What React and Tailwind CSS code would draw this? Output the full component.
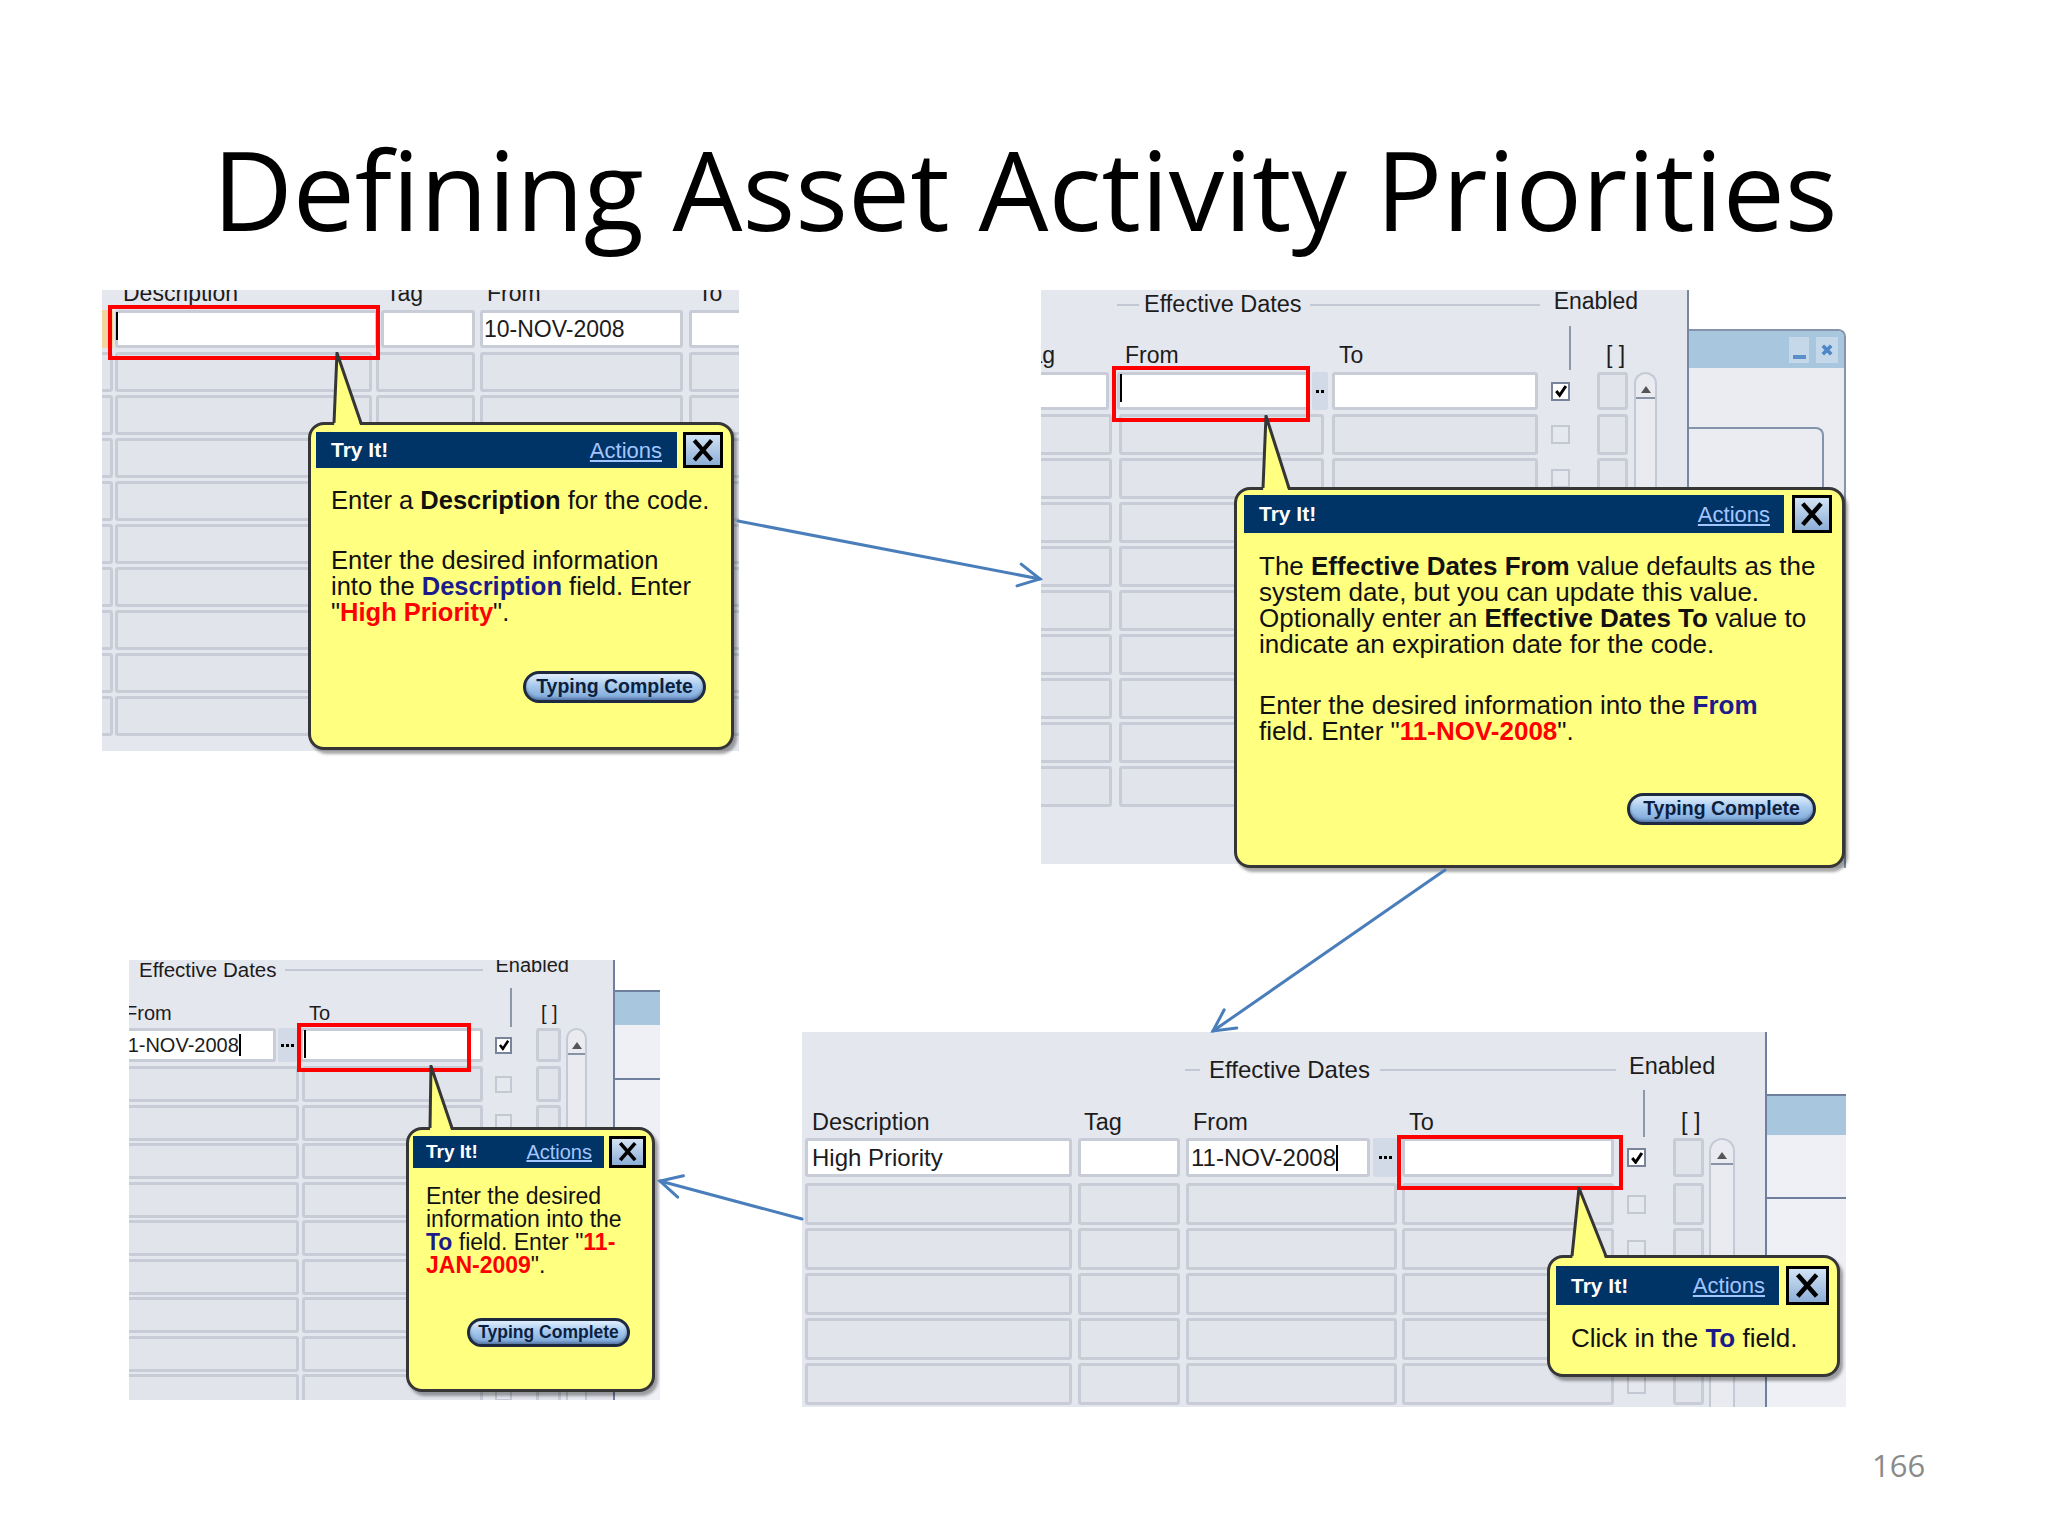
import React from 'react';

// shared bits of the Oracle form look
const cell = 'h-full shrink-0 rounded-[3px] border-[3px] border-[#c8ccd7] bg-[#e2e4ec]';
const field = 'flex h-full shrink-0 items-center overflow-hidden whitespace-nowrap rounded-[3px] border-[3px] border-[#c8ccd7] bg-white';
const ui = "font-['Liberation_Sans',Arial,sans-serif]";

const ARROWS = [
  [738, 521, 1040, 579],
  [1445, 870, 1213, 1031],
  [802, 1219, 660, 1181],
];

const arrowHead = (x1, y1, x2, y2) => {
  const a = Math.atan2(y2 - y1, x2 - x1);
  const len = 24;
  const s = 0.48;
  return `${x2 - len * Math.cos(a - s)},${y2 - len * Math.sin(a - s)} ${x2},${y2} ${x2 - len * Math.cos(a + s)},${y2 - len * Math.sin(a + s)}`;
};

const Box = ({ on, className }) => (
  <div
    className={`flex shrink-0 items-center justify-center self-center border-2 ${
      on ? 'border-[#79839a] bg-white' : 'border-[#c3c8d3] bg-[#e6e8ef]'
    } ${className}`}
  >
    {on && (
      <svg viewBox="0 0 12 12" className="h-[90%] w-[90%]">
        <path d="M2 6.2 L5 10 L10.5 1.8" fill="none" stroke="#000" strokeWidth="2.6" />
      </svg>
    )}
  </div>
);

const Dots = ({ className }) => (
  <div className={`flex h-full shrink-0 items-center justify-center gap-[2px] rounded-[2px] bg-[#d3dae7] ${className}`}>
    <span className="size-[3px] bg-black" />
    <span className="size-[3px] bg-black" />
    <span className="size-[3px] bg-black" />
  </div>
);

const Scroll = ({ className }) => (
  <div className={`shrink-0 rounded-t-full border-2 border-b-0 border-[#c3c9d5] bg-[#e9ebf1] ${className}`}>
    <div className="mx-auto mt-[12px] h-0 w-0 border-x-[5px] border-b-[7px] border-x-transparent border-b-[#555]" />
    <div className="mt-[4px] h-[2px] bg-[#8a93a6]" />
  </div>
);

const Cursor = ({ className }) => <span className={`inline-block w-[2px] bg-black ${className}`} />;

const Tail = ({ className, w, h, tip, l, r }) => (
  <svg className={`absolute ${className}`} width={w} height={h + 6} viewBox={`0 0 ${w} ${h + 6}`}>
    <polygon points={`${tip},1 ${r},${h + 6} ${l},${h + 6}`} fill="#ffff80" />
    <polyline
      points={`${l},${h + 1} ${tip},1 ${r},${h + 1}`}
      fill="none"
      stroke="#363636"
      strokeWidth="3"
      strokeLinejoin="round"
    />
  </svg>
);

const CloseX = ({ className }) => (
  <div
    className={`flex shrink-0 items-center justify-center border-[3px] border-black bg-[linear-gradient(#d2e3f5,#8caed6)] ${className}`}
  >
    <svg viewBox="0 0 20 20" className="h-[82%] w-[82%]">
      <path d="M3 2 L17 18 M17 2 L3 18" stroke="#000" strokeWidth="3.4" />
    </svg>
  </div>
);

const TypingBtn = ({ className }) => (
  <div
    className={`flex items-center justify-center rounded-full border-[3px] border-[#1d2a40] bg-[linear-gradient(#e1effd,#a6c9ee_45%,#7ba7d8)] font-bold text-[#0d1f3f] shadow-[inset_0_-2px_3px_rgba(0,0,50,0.3)] ${className}`}
  >
    Typing Complete
  </div>
);

const Callout = ({ box, tail, bar, children }) => (
  <div
    className={`absolute rounded-[16px] border-[3px] border-[#363636] bg-[#ffff80] text-[#111] shadow-[3px_4px_3px_rgba(0,0,0,0.35)] ${ui} ${box}`}
  >
    {tail}
    <div className={`flex ${bar.wrap}`}>
      <div className={`flex h-full items-center justify-between bg-[#003366] ${bar.navy}`}>
        <span className={`font-bold text-white ${bar.tryText}`}>Try It!</span>
        <span className={`text-[#a3c5ff] underline ${bar.actText}`}>Actions</span>
      </div>
      <CloseX className={bar.close} />
    </div>
    {children}
  </div>
);

const Blue = ({ children }) => <b className="text-[#1b1b8a]">{children}</b>;
const Red = ({ children }) => <b className="text-[#ff0000]">{children}</b>;

function Panel1() {
  return (
    <div className={`absolute left-[102px] top-[290px] h-[461px] w-[637px] ${ui}`}>
      <div className="h-full w-full overflow-hidden bg-[#e5e7ee] text-[23px] leading-none text-[#1c1c1c]">
        <div className="-mt-[8px] flex h-[28px] items-start">
          <span className="w-[284px] shrink-0 pl-[21px]">Description</span>
          <span className="w-[101px] shrink-0">Tag</span>
          <span className="w-[211px] shrink-0">From</span>
          <span>To</span>
        </div>
        <div className="flex h-[38px]">
          <div className="h-full w-[11px] shrink-0 bg-[#f4d6a0]" />
          <div className={`${field} ml-[2px] w-[263px]`} />
          <div className={`${field} ml-[3px] w-[94px]`} />
          <div className={`${field} ml-[5px] w-[203px] pl-[1px] text-[23px]`}>10-NOV-2008</div>
          <div className={`${field} ml-[6px] w-[60px]`} />
        </div>
        <div className="mt-[4px] flex flex-col gap-[3px]">
          {Array.from({ length: 9 }).map((_, i) => (
            <div key={i} className="flex h-[40px]">
              <div className={`${cell} -ml-[3px] w-[14px]`} />
              <div className={`${cell} ml-[2px] w-[257px]`} />
              <div className={`${cell} ml-[4px] w-[99px]`} />
              <div className={`${cell} ml-[5px] w-[203px]`} />
              <div className={`${cell} ml-[6px] w-[60px]`} />
            </div>
          ))}
        </div>
      </div>

      {/* highlighted field */}
      <div className="absolute left-[6px] top-[15px] h-[55px] w-[272px] border-[4px] border-[#ff0000]">
        <Cursor className="ml-[4px] mt-[3px] h-[28px]" />
      </div>

      <Callout
        box="left-[206px] top-[132px] h-[328px] w-[426px]"
        tail={<Tail className="left-[-3px] top-[-73px]" w={60} h={70} tip={29} l={26} r={53} />}
        bar={{
          wrap: 'mt-[7px] ml-[5px] h-[36px]',
          navy: 'w-[361px] pl-[15px] pr-[15px]',
          tryText: 'text-[21px]',
          actText: 'text-[22px]',
          close: 'ml-[6px] h-[36px] w-[40px]',
        }}
      >
        <div className="whitespace-nowrap pl-[20px] text-[25.5px] leading-[26px]">
          <p className="mt-[19px]">
            Enter a <b>Description</b> for the code.
          </p>
          <p className="mt-[34px]">
            Enter the desired information
            <br />
            into the <Blue>Description</Blue> field. Enter
            <br />"<Red>High Priority</Red>".
          </p>
        </div>
        <TypingBtn className="ml-[212px] mt-[46px] h-[32px] w-[183px] text-[19.5px]" />
      </Callout>
    </div>
  );
}

function Panel2() {
  return (
    <div className={`absolute left-[1041px] top-[290px] h-[578px] w-[805px] ${ui}`}>
      <div className="flex h-full items-start">
        <div className="h-[574px] w-[648px] shrink-0 overflow-hidden border-r-2 border-[#7886a0] bg-[#e5e7ee] text-[23px] leading-none text-[#1c1c1c]">
          <div className="flex h-[30px] items-center">
            <div className="ml-[76px] h-[2px] w-[22px] shrink-0 bg-[#c3c8d4]" />
            <span className="ml-[5px] shrink-0 text-[23.5px]">Effective Dates</span>
            <div className="ml-[8px] h-[2px] w-[230px] shrink-0 bg-[#c3c8d4]" />
            <span className="-mt-[8px] ml-[14px] shrink-0">Enabled</span>
          </div>
          <div className="flex h-[52px] items-end pb-[5px]">
            <span className="-ml-[23px] w-[107px] shrink-0">Tag</span>
            <span className="w-[214px] shrink-0">From</span>
            <span className="w-[230px] shrink-0">To</span>
            <div className="-mb-[3px] h-[44px] w-[2px] shrink-0 bg-[#8e97aa]" />
            <span className="ml-[35px] shrink-0">[ ]</span>
          </div>
          <div className="flex items-start">
            <div className="flex shrink-0 flex-col">
              <div className="flex h-[38px]">
                <div className={`${field} -ml-[4px] w-[72px]`} />
                <div className={`${field} ml-[8px] w-[192px]`} />
                <Dots className="ml-[3px] w-[16px] [&>span:first-child]:hidden" />
                <div className={`${field} ml-[4px] w-[206px]`} />
                <Box on className="ml-[13px] size-[19px]" />
                <div className={`${cell} ml-[27px] w-[31px]`} />
              </div>
              <div className="mt-[4px] flex flex-col gap-[3px]">
                {Array.from({ length: 9 }).map((_, i) => (
                  <div key={i} className="flex h-[41px]">
                    <div className={`${cell} -ml-[4px] w-[75px]`} />
                    <div className={`${cell} ml-[7px] w-[205px]`} />
                    <div className={`${cell} ml-[8px] w-[206px]`} />
                    <Box className="ml-[13px] size-[19px]" />
                    <div className={`${cell} ml-[27px] w-[31px]`} />
                  </div>
                ))}
              </div>
            </div>
            <Scroll className="ml-[6px] h-[460px] w-[23px]" />
          </div>
        </div>

        {/* window behind */}
        <div className="mt-[39px] flex h-[539px] w-[157px] shrink-0 flex-col rounded-tr-[8px] border-r-2 border-t-2 border-[#8594ad] bg-[#eaecf2]">
          <div className="flex h-[37px] items-center justify-end gap-[7px] rounded-tr-[6px] bg-[#a9c6df] pr-[6px]">
            <div className="flex h-[26px] w-[20px] items-end justify-center bg-[#c4d8ea] pb-[4px]">
              <div className="h-[4px] w-[13px] bg-[#5b8fc9]" />
            </div>
            <div className="flex h-[26px] w-[22px] items-center justify-center bg-[#c4d8ea]">
              <svg viewBox="0 0 10 10" className="size-[14px]">
                <path d="M2 2 L8 8 M8 2 L2 8" stroke="#4f86c6" strokeWidth="2.6" />
              </svg>
            </div>
          </div>
          <div className="mr-[20px] mt-[59px] h-[200px] rounded-tr-[8px] border-r-2 border-t-2 border-[#8594ad]" />
        </div>
      </div>

      <div className="absolute left-[71px] top-[76px] h-[56px] w-[198px] border-[4px] border-[#ff0000]">
        <Cursor className="ml-[4px] mt-[4px] h-[28px]" />
      </div>

      <Callout
        box="left-[193px] top-[197px] h-[381px] w-[611px]"
        tail={<Tail className="left-[-3px] top-[-75px]" w={64} h={72} tip={32} l={29} r={55} />}
        bar={{
          wrap: 'mt-[5px] ml-[7px] h-[38px]',
          navy: 'w-[540px] pl-[15px] pr-[14px]',
          tryText: 'text-[21px]',
          actText: 'text-[22px]',
          close: 'ml-[8px] h-[38px] w-[40px]',
        }}
      >
        <div className="whitespace-nowrap pl-[22px] text-[26px] leading-[26px]">
          <p className="mt-[20px]">
            The <b>Effective Dates From</b> value defaults as the
            <br />
            system date, but you can update this value.
            <br />
            Optionally enter an <b>Effective Dates To</b> value to
            <br />
            indicate an expiration date for the code.
          </p>
          <p className="mt-[35px]">
            Enter the desired information into the <Blue>From</Blue>
            <br />
            field. Enter "<Red>11-NOV-2008</Red>".
          </p>
        </div>
        <TypingBtn className="ml-[390px] mt-[49px] h-[32px] w-[189px] text-[19.5px]" />
      </Callout>
    </div>
  );
}

function Panel3() {
  return (
    <div className={`absolute left-[129px] top-[960px] h-[440px] w-[531px] ${ui}`}>
      <div className="flex h-full items-start">
        <div className="h-full w-[486px] shrink-0 overflow-hidden border-r-2 border-[#6f7f9e] bg-[#e5e7ee] text-[20px] leading-none text-[#1c1c1c]">
          <div className="flex h-[20px] items-center">
            <span className="ml-[10px] shrink-0 text-[20.5px]">Effective Dates</span>
            <div className="ml-[8px] h-[2px] w-[198px] shrink-0 bg-[#c3c8d4]" />
            <span className="-mt-[10px] ml-[13px] shrink-0">Enabled</span>
          </div>
          <div className="flex h-[48px] items-end pb-[5px]">
            <span className="-ml-[4px] w-[184px] shrink-0">From</span>
            <span className="w-[201px] shrink-0">To</span>
            <div className="-mb-[4px] h-[39px] w-[2px] shrink-0 bg-[#8e97aa]" />
            <span className="ml-[29px] shrink-0">[ ]</span>
          </div>
          <div className="flex items-start">
            <div className="flex shrink-0 flex-col">
              <div className="flex h-[34px]">
                <div className={`${field} -ml-[4px] w-[151px] text-[20px]`}>
                  <span className="-ml-[10px]">11-NOV-2008</span>
                  <Cursor className="h-[22px]" />
                </div>
                <Dots className="ml-[2px] w-[19px]" />
                <div className={`${field} ml-[3px] w-[183px]`} />
                <Box on className="ml-[12px] size-[17px]" />
                <div className={`${cell} ml-[24px] w-[25px]`} />
              </div>
              <div className="mt-[4px] flex flex-col gap-[2.5px]">
                {Array.from({ length: 9 }).map((_, i) => (
                  <div key={i} className="flex h-[36px]">
                    <div className={`${cell} -ml-[4px] w-[174px]`} />
                    <div className={`${cell} ml-[3px] w-[181px]`} />
                    <Box className="ml-[12px] size-[17px]" />
                    <div className={`${cell} ml-[24px] w-[25px]`} />
                  </div>
                ))}
              </div>
            </div>
            <Scroll className="ml-[5px] h-[380px] w-[21px]" />
          </div>
        </div>

        <div className="mt-[30px] flex h-[410px] w-[45px] shrink-0 flex-col border-t-2 border-[#6f7f9e] bg-[#eef0f5]">
          <div className="h-[33px] bg-[#a9c6df]" />
          <div className="mt-[53px] border-t-2 border-[#6f7f9e]" />
        </div>
      </div>

      <div className="absolute left-[168px] top-[63px] h-[49px] w-[174px] border-[4px] border-[#ff0000]">
        <Cursor className="ml-[3px] mt-[3px] h-[28px]" />
      </div>

      <Callout
        box="left-[277px] top-[167px] h-[265px] w-[249px]"
        tail={<Tail className="left-[-3px] top-[-65px]" w={52} h={62} tip={25} l={24} r={46} />}
        bar={{
          wrap: 'mt-[6px] ml-[4px] h-[32px]',
          navy: 'w-[191px] pl-[13px] pr-[12px]',
          tryText: 'text-[19px]',
          actText: 'text-[20px]',
          close: 'ml-[5px] h-[32px] w-[37px]',
        }}
      >
        <div className="whitespace-nowrap pl-[17px] text-[23px] leading-[23px]">
          <p className="mt-[17px]">
            Enter the desired
            <br />
            information into the
            <br />
            <Blue>To</Blue> field. Enter "<Red>11-</Red>
            <br />
            <Red>JAN-2009</Red>".
          </p>
        </div>
        <TypingBtn className="ml-[58px] mt-[41px] h-[29px] w-[163px] text-[17.5px]" />
      </Callout>
    </div>
  );
}

function Panel4() {
  return (
    <div className={`absolute left-[802px] top-[1032px] h-[375px] w-[1044px] ${ui}`}>
      <div className="flex h-full items-start">
        <div className="h-full w-[965px] shrink-0 overflow-hidden border-r-2 border-[#6f7f9e] bg-[#e5e7ee] text-[23.5px] leading-none text-[#1c1c1c]">
          <div className="flex h-[58px] items-center pt-[18px]">
            <div className="ml-[383px] h-[2px] w-[15px] shrink-0 bg-[#c3c8d4]" />
            <span className="ml-[9px] shrink-0 text-[24px]">Effective Dates</span>
            <div className="ml-[10px] h-[2px] w-[236px] shrink-0 bg-[#c3c8d4]" />
            <span className="-mt-[6px] ml-[13px] shrink-0">Enabled</span>
          </div>
          <div className="flex h-[48px] items-end pb-[4px]">
            <span className="w-[282px] shrink-0 pl-[10px]">Description</span>
            <span className="w-[109px] shrink-0">Tag</span>
            <span className="w-[216px] shrink-0">From</span>
            <span className="w-[234px] shrink-0">To</span>
            <div className="-mb-[3px] h-[47px] w-[2px] shrink-0 bg-[#8e97aa]" />
            <span className="ml-[36px] shrink-0">[ ]</span>
          </div>
          <div className="flex items-start">
            <div className="flex shrink-0 flex-col">
              <div className="flex h-[39px]">
                <div className={`${field} ml-[3px] w-[267px] pl-[4px] text-[24px]`}>High Priority</div>
                <div className={`${field} ml-[6px] w-[102px]`} />
                <div className={`${field} ml-[6px] w-[184px] pl-[2px] text-[24px]`}>
                  11-NOV-2008
                  <Cursor className="h-[26px]" />
                </div>
                <Dots className="ml-[3px] w-[24px]" />
                <div className={`${field} ml-[5px] w-[212px]`} />
                <Box on className="ml-[13px] size-[19px]" />
                <div className={`${cell} ml-[27px] w-[31px]`} />
              </div>
              <div className="mt-[6px] flex flex-col gap-[3px]">
                {Array.from({ length: 5 }).map((_, i) => (
                  <div key={i} className="flex h-[42px]">
                    <div className={`${cell} ml-[3px] w-[267px]`} />
                    <div className={`${cell} ml-[6px] w-[102px]`} />
                    <div className={`${cell} ml-[6px] w-[211px]`} />
                    <div className={`${cell} ml-[5px] w-[212px]`} />
                    <Box className="ml-[13px] size-[19px]" />
                    <div className={`${cell} ml-[27px] w-[31px]`} />
                  </div>
                ))}
              </div>
            </div>
            <Scroll className="ml-[5px] h-[280px] w-[26px]" />
          </div>
        </div>

        <div className="mt-[62px] flex h-[313px] w-[79px] shrink-0 flex-col border-t-2 border-[#6f7f9e] bg-[#eef0f5]">
          <div className="h-[39px] bg-[#a9c6df]" />
          <div className="mt-[62px] border-t-2 border-[#6f7f9e]" />
        </div>
      </div>

      <div className="absolute left-[595px] top-[103px] h-[55px] w-[226px] border-[4px] border-[#ff0000]" />

      <Callout
        box="left-[745px] top-[223px] h-[122px] w-[293px]"
        tail={<Tail className="left-[-3px] top-[-71px]" w={64} h={68} tip={32} l={25} r={59} />}
        bar={{
          wrap: 'mt-[8px] ml-[6px] h-[39px]',
          navy: 'w-[223px] pl-[15px] pr-[14px]',
          tryText: 'text-[21px]',
          actText: 'text-[22px]',
          close: 'ml-[7px] h-[39px] w-[43px]',
        }}
      >
        <p className="mt-[20px] whitespace-nowrap pl-[21px] text-[26px] leading-[26px]">
          Click in the <Blue>To</Blue> field.
        </p>
      </Callout>
    </div>
  );
}

export default function App() {
  return (
    <div className="relative h-[1536px] w-[2048px] overflow-hidden bg-white">
      <h1 className="pl-[2px] pt-[133px] text-center font-['Open_Sans',sans-serif] text-[110.7px] font-normal leading-none text-black">
        Defining Asset Activity Priorities
      </h1>

      <Panel1 />
      <Panel2 />
      <Panel3 />
      <Panel4 />

      <svg className="pointer-events-none absolute left-0 top-0" width="2048" height="1536">
        {ARROWS.map(([x1, y1, x2, y2], i) => (
          <g key={i} stroke="#4a7ebb" strokeWidth="3" fill="none" strokeLinecap="round">
            <line x1={x1} y1={y1} x2={x2} y2={y2} />
            <polyline points={arrowHead(x1, y1, x2, y2)} />
          </g>
        ))}
      </svg>

      <div className="absolute left-[1872px] top-[1450px] font-['Open_Sans',sans-serif] text-[31px] leading-none text-[#8a8a8a]">
        166
      </div>
    </div>
  );
}
